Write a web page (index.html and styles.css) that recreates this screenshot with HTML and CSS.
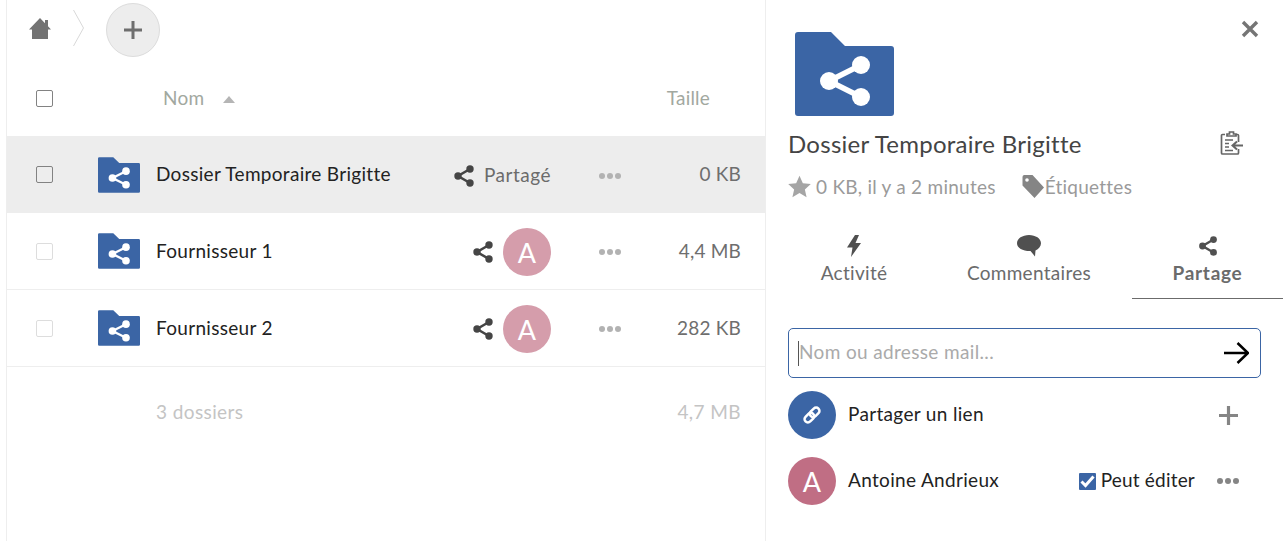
FILE: index.html
```html
<!DOCTYPE html>
<html lang="fr">
<head>
  <meta charset="UTF-8" />
  <meta name="viewport" content="width=device-width, initial-scale=1" />
  <title>Fichiers</title>
  <link rel="stylesheet" href="styles.css">
</head>
<body>

  <!-- shared icons -->
  <svg class="defs" aria-hidden="true">
    <symbol id="i-share" viewBox="0 0 24 24">
      <path d="M18 5 6 12l12 7" fill="none" stroke="currentColor" stroke-width="2.600"/>
      <circle cx="18" cy="5" r="3.700" fill="currentColor"/>
      <circle cx="6" cy="12" r="3.700" fill="currentColor"/>
      <circle cx="18" cy="19" r="3.700" fill="currentColor"/>
    </symbol>
    <symbol id="i-folder" viewBox="0 0 99 84">
      <path d="M3 0h33l14 14h46a3 3 0 0 1 3 3v64a3 3 0 0 1-3 3H3a3 3 0 0 1-3-3V3a3 3 0 0 1 3-3z" fill="#3b65a5"/>
      <path d="M66 33 34 49l32 16" fill="none" stroke="#fff" stroke-width="5.500"/>
      <circle cx="66" cy="33" r="9" fill="#fff"/>
      <circle cx="34" cy="49" r="9" fill="#fff"/>
      <circle cx="66" cy="65" r="9" fill="#fff"/>
    </symbol>
    <symbol id="i-dots" viewBox="0 0 22 6">
      <circle cx="3" cy="3" r="3" fill="currentColor"/>
      <circle cx="11" cy="3" r="3" fill="currentColor"/>
      <circle cx="19" cy="3" r="3" fill="currentColor"/>
    </symbol>
    <symbol id="i-plus" viewBox="0 0 18 18">
      <path d="M9 0v18M0 9h18" stroke="currentColor" stroke-width="3" fill="none"/>
    </symbol>
  </svg>

  <div class="page">
    <main class="files">
      <div class="crumbs">
        <svg class="home" viewBox="0 0 22 21">
          <path d="M11 0 0 11.500h3V21h16v-9.500h3l-3-3.200V2h-3v3.200z" fill="#737373"/>
        </svg>
        <svg class="chevron" viewBox="0 0 11 36">
          <path d="M.5 0 10.500 18 .5 36" fill="none" stroke="#d8d8d8" stroke-width="1"/>
        </svg>
        <div class="add-btn"><svg class="plus"><use href="#i-plus"/></svg></div>
      </div>

      <div class="thead">
        <span class="check check-head"></span>
        <span class="col-name">Nom</span>
        <span class="sort-arrow"></span>
        <span class="col-size">Taille</span>
      </div>

      <div class="row selected">
        <span class="check check-dark"></span>
        <svg class="folder"><use href="#i-folder"/></svg>
        <span class="name">Dossier Temporaire Brigitte</span>
        <span class="share">
          <svg class="share-icon"><use href="#i-share"/></svg>
          <span class="shared-label">Partagé</span>
        </span>
        <svg class="dots"><use href="#i-dots"/></svg>
        <span class="size">0 KB</span>
      </div>

      <div class="row">
        <span class="check"></span>
        <svg class="folder"><use href="#i-folder"/></svg>
        <span class="name">Fournisseur 1</span>
        <span class="share">
          <svg class="share-icon"><use href="#i-share"/></svg>
          <span class="avatar light">A</span>
        </span>
        <svg class="dots"><use href="#i-dots"/></svg>
        <span class="size">4,4 MB</span>
      </div>

      <div class="row">
        <span class="check"></span>
        <svg class="folder"><use href="#i-folder"/></svg>
        <span class="name">Fournisseur 2</span>
        <span class="share">
          <svg class="share-icon"><use href="#i-share"/></svg>
          <span class="avatar light">A</span>
        </span>
        <svg class="dots"><use href="#i-dots"/></svg>
        <span class="size">282 KB</span>
      </div>

      <div class="summary">
        <span class="summary-name">3 dossiers</span>
        <span class="summary-size">4,7 MB</span>
      </div>
    </main>

    <aside class="details">
      <div class="close-row">
        <svg class="close" viewBox="0 0 18 18">
          <path d="M2 2l14 14M16 2 2 16" stroke="#757575" stroke-width="3.400" fill="none"/>
        </svg>
      </div>
      <svg class="big-folder"><use href="#i-folder"/></svg>

      <div class="title-row">
        <h1>Dossier Temporaire Brigitte</h1>
        <svg class="copy" viewBox="0 0 24 24">
          <path d="M8 3h2.500V1h4v2H17v2H8zM6 3.500H3.500a1 1 0 0 0-1 1V22a1 1 0 0 0 1 1h15a1 1 0 0 0 1-1v-4M19.500 11V4.500a1 1 0 0 0-1-1H17" fill="none" stroke="#666" stroke-width="1.700"/>
          <path d="M6 9h8M6 12.500h4M6 16h4M6 19.500h8" stroke="#666" stroke-width="1.700"/>
          <path d="M24 14.500H14M18 10.500l-4.500 4 4.500 4" fill="none" stroke="#666" stroke-width="2"/>
        </svg>
      </div>

      <div class="meta">
        <svg class="star" viewBox="0 0 24 24">
          <path d="M12 .8l3.500 7.700 8.300.9-6.200 5.600 1.800 8.200L12 18.900l-7.400 4.300 1.800-8.200L.2 9.400l8.300-.9z" fill="#a5a5a5"/>
        </svg>
        <span class="meta-text">0 KB, il y a 2 minutes</span>
        <svg class="tag" viewBox="0 0 22 23">
          <path d="M2 0h8.500L22 12.500 12.500 23 .5 10.500V2A2 2 0 0 1 2 0z" fill="#858585"/>
          <circle cx="5" cy="5" r="1.800" fill="#fff"/>
        </svg>
        <span class="meta-text">Étiquettes</span>
      </div>

      <div class="tabs">
        <div class="tab tab-activity">
          <svg class="tab-icon" viewBox="0 0 16 22">
            <path d="M9 0 1 12.500h5.500L5 22l10-14H9.500L13 0z" fill="#505050"/>
          </svg>
          <span>Activité</span>
        </div>
        <div class="tab tab-comments">
          <svg class="tab-icon" viewBox="0 0 24 22">
            <path d="M12 0c6.600 0 12 3.600 12 8.200 0 3.200-2.400 5.800-5.500 7.200l-.5 6-4.500-5.300C6 16.300 0 12.900 0 8.200 0 3.600 5.400 0 12 0z" fill="#505050"/>
          </svg>
          <span>Commentaires</span>
        </div>
        <div class="tab tab-share active">
          <svg class="tab-icon share-tab"><use href="#i-share"/></svg>
          <span>Partage</span>
        </div>
      </div>

      <div class="search">
        <span class="caret"></span>
        <span class="placeholder">Nom ou adresse mail...</span>
        <svg class="arrow" viewBox="0 0 25 22">
          <path d="M0 11h24M13.500 1 24 11 13.500 21" fill="none" stroke="#000" stroke-width="2.500"/>
        </svg>
      </div>

      <div class="sharee link-row">
        <span class="avatar big blue">
          <svg class="link-icon" viewBox="0 0 24 24">
            <g fill="none" stroke="#fff" stroke-width="3" transform="rotate(-45 12 12)">
              <rect x="1" y="8" width="13" height="8" rx="4"/>
              <rect x="10" y="8" width="13" height="8" rx="4"/>
            </g>
          </svg>
        </span>
        <span class="sharee-name">Partager un lien</span>
        <svg class="plus link-plus"><use href="#i-plus"/></svg>
      </div>

      <div class="sharee">
        <span class="avatar big rose">A</span>
        <span class="sharee-name">Antoine Andrieux</span>
        <span class="tick">
          <svg viewBox="0 0 17 17"><path d="M2.500 8.500l4 4 8-9" fill="none" stroke="#fff" stroke-width="3"/></svg>
        </span>
        <span class="perm">Peut éditer</span>
        <svg class="dots sharee-dots"><use href="#i-dots"/></svg>
      </div>
    </aside>
  </div>

</body>
</html>
```

FILE: styles.css
```css
html, body {
  margin: 0;
  padding: 0;
  height: 100%;
  overflow: hidden;
  background: #fff;
  font-family: 'Lato', 'Noto Sans', sans-serif;
  color: #222;
}

.defs {
  display: none;
}

.page {
  display: flex;
  height: 541px;
  padding-left: 6px;
}

/* Left file list */
.files {
  width: 758px;
  flex-shrink: 0;
  border-left: 1px solid #eee;
  border-right: 1px solid #eee;
}

.crumbs {
  display: flex;
  align-items: center;
  height: 60px;
  padding-left: 22px;
}

.home {
  width: 22px;
  height: 21px;
  margin-top: -3px;
}

.chevron {
  width: 11px;
  height: 36px;
  margin: -4px 22px 0;
}

.add-btn {
  width: 52px;
  height: 52px;
  border: 1px solid #dcdcdc;
  border-radius: 50%;
  background: #ededed;
  color: #6e6e6e;
  display: flex;
  align-items: center;
  justify-content: center;
}

.plus {
  width: 18px;
  height: 18px;
}

.thead {
  display: flex;
  align-items: center;
  height: 76px;
  font-size: 19px;
  letter-spacing: 0.2px;
  color: #a2a89f;
}

.check {
  width: 15px;
  height: 15px;
  margin-left: 29px;
  flex-shrink: 0;
  border: 1px solid #ddd;
  border-radius: 2px;
}

.check-head,
.check-dark {
  border-color: #828282;
}

.col-name {
  margin-left: 110px;
  padding-bottom: 2px;
}

.sort-arrow {
  width: 0;
  height: 0;
  margin: 2px 0 0 19px;
  border-left: 6px solid transparent;
  border-right: 6px solid transparent;
  border-bottom: 7px solid #b5b5b5;
}

.col-size {
  margin-left: auto;
  margin-right: 55px;
  padding-bottom: 2px;
}

.row {
  display: flex;
  align-items: center;
  height: 76px;
  border-bottom: 1px solid #eee;
}

.row.selected {
  height: 77px;
  background: #ededed;
  border-bottom: 0;
}

.folder {
  width: 42px;
  height: 36px;
  margin-left: 45px;
  flex-shrink: 0;
}

.name {
  margin-left: 16px;
  padding-bottom: 2px;
  flex: 1;
  font-size: 19px;
  letter-spacing: 0.3px;
  color: #222;
}

.share {
  display: flex;
  align-items: center;
  gap: 8px;
  padding-top: 2px;
}

.share-icon {
  width: 24px;
  height: 24px;
  color: #454545;
}

.shared-label {
  font-size: 19px;
  letter-spacing: 0.5px;
  color: #6b6b6b;
  padding-bottom: 2px;
}

.avatar {
  display: flex;
  align-items: center;
  justify-content: center;
  border-radius: 50%;
  color: #fff;
  flex-shrink: 0;
  width: 48px;
  height: 48px;
  font-size: 27px;
}

.avatar.light {
  background: #d59dab;
}

.dots {
  width: 22px;
  height: 6px;
  margin: 2px 0 0 48px;
  color: #b2b2b2;
  flex-shrink: 0;
}

.size {
  width: 120px;
  padding-right: 24px;
  padding-bottom: 2px;
  text-align: right;
  font-size: 19px;
  letter-spacing: 0.2px;
  color: #6e6e6e;
}

.summary {
  display: flex;
  justify-content: space-between;
  align-items: center;
  height: 88px;
  padding: 0 24px 2px 149px;
  font-size: 19px;
  letter-spacing: 0.4px;
  color: #c4c4c4;
}

/* Right details panel */
.details {
  flex: 1;
  min-width: 0;
  padding-left: 22px;
}

.close-row {
  display: flex;
  justify-content: flex-end;
  padding: 20px 24px 0 0;
  height: 12px;
}

.close {
  width: 18px;
  height: 18px;
}

.big-folder {
  display: block;
  width: 99px;
  height: 84px;
  margin-left: 7px;
}

.title-row {
  display: flex;
  align-items: center;
  justify-content: space-between;
  height: 30px;
  margin-top: 12px;
  padding-right: 40px;
}

h1 {
  margin: 0;
  font-size: 24px;
  font-weight: 400;
  letter-spacing: 0.27px;
  color: #444;
}

.copy {
  width: 24px;
  height: 24px;
}

.meta {
  display: flex;
  align-items: center;
  height: 24px;
  margin-top: 16px;
}

.star {
  width: 23px;
  height: 23px;
  margin-right: 5px;
}

.meta-text {
  font-size: 19px;
  letter-spacing: 0.25px;
  color: #9a9a9a;
}

.tag {
  width: 22px;
  height: 23px;
  margin-left: 26px;
  margin-right: 1px;
}

.tabs {
  display: flex;
  margin: 37px 0 0 -22px;
}

.tab {
  display: flex;
  flex-direction: column;
  align-items: center;
  height: 64px;
  box-sizing: border-box;
  font-size: 19px;
  letter-spacing: 0.3px;
  color: #6b6b6b;
}

.tab-activity {
  width: 176px;
}

.tab-comments {
  width: 174px;
  margin-right: 16px;
}

.tab-share {
  width: 151px;
}

.tab.active {
  font-weight: 700;
  letter-spacing: 0.7px;
  border-bottom: 1px solid #6b6b6b;
}

.tab-icon {
  width: 24px;
  height: 22px;
  margin-bottom: 4px;
}

.share-tab {
  color: #505050;
}

.search {
  display: flex;
  align-items: center;
  width: 462px;
  height: 48px;
  margin-top: 29px;
  border: 1px solid #3b65a5;
  border-radius: 5px;
  padding-left: 9px;
}

.caret {
  width: 1px;
  height: 25px;
  background: #555;
}

.placeholder {
  flex: 1;
  padding-bottom: 4px;
  font-size: 19px;
  letter-spacing: 0.35px;
  color: #aaa;
}

.arrow {
  width: 25px;
  height: 22px;
  margin-right: 11px;
}

.sharee {
  display: flex;
  align-items: center;
  height: 48px;
  margin-top: 18px;
}

.link-row {
  margin-top: 13px;
}

.avatar.big {
  margin-right: 12px;
}

.avatar.blue {
  background: #3b65a5;
}

.avatar.rose {
  background: #c06e84;
}

.link-icon {
  width: 20px;
  height: 20px;
}

.sharee-name {
  flex: 1;
  padding-bottom: 3px;
  font-size: 19px;
  letter-spacing: 0.33px;
  color: #222;
}

.link-plus {
  width: 19px;
  height: 19px;
  color: #858585;
  margin-right: 45px;
}

.tick {
  display: flex;
  width: 17px;
  height: 17px;
  background: #3b65a5;
  border-radius: 1px;
  margin-right: 5px;
}

.perm {
  padding-bottom: 3px;
  font-size: 19px;
  letter-spacing: 0.2px;
  color: #222;
}

.sharee-dots {
  margin: 0 44px 0 22px;
  color: #858585;
}
```
